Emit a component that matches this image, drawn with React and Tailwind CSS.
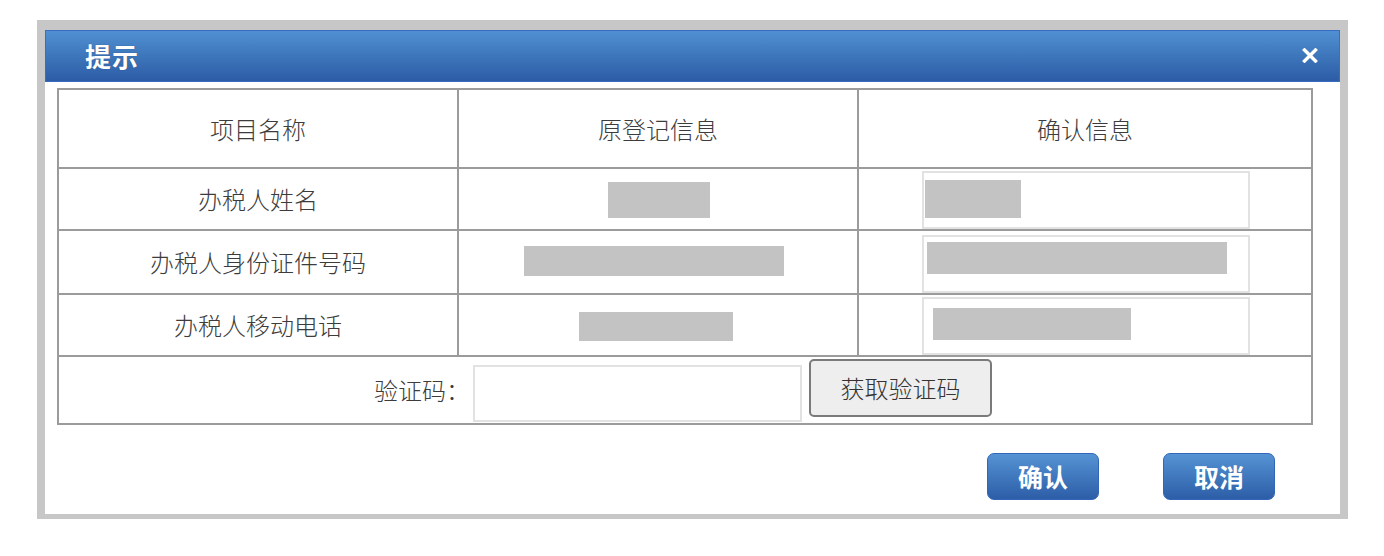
import React from "react";

const font = { fontFamily: '"Noto Sans CJK SC", "Noto Sans", sans-serif' };

function Blank({ w, h }) {
  return <div className="bg-[#c3c3c3]" style={{ width: w, height: h }} />;
}

export default function App() {
  return (
    <div className="w-[1384px] h-[556px] bg-white overflow-hidden" style={font}>
      <div className="ml-[37px] mt-[20px] w-[1311px] h-[499px] border-solid border-[#c7c7c7] border-t-[10px] border-x-[8px] border-b-[5px] bg-white flex flex-col">
        {/* title bar */}
        <div className="h-[52px] shrink-0 flex items-center justify-between pl-[39px] pr-[21px] bg-gradient-to-b from-[#5090d2] to-[#2c5ca5] border border-[#3a6cc2]">
          <span className="text-white font-bold text-[26px] leading-none tracking-[1px] [text-shadow:0_0_1px_rgba(0,0,0,0.4)]">
            提示
          </span>
          <svg width="16" height="15" viewBox="0 0 16 15" className="mt-[-2px]">
            <path d="M2.5 2 L13.5 13 M13.5 2 L2.5 13" stroke="#ffffff" strokeWidth="3.4" strokeLinecap="square" />
          </svg>
        </div>

        {/* content */}
        <div className="flex-1 flex flex-col pl-[12px] pt-[6px]">
          <div className="w-[1256px] border-t-2 border-l-2 border-[#9b9b9b] grid grid-cols-[400px_400px_454px] text-[24px] font-light text-[#3c3c3c] leading-none">
            {/* header */}
            <div className="h-[79px] border-r-2 border-b-2 border-[#9b9b9b] flex items-center justify-center">项目名称</div>
            <div className="h-[79px] border-r-2 border-b-2 border-[#9b9b9b] flex items-center justify-center">原登记信息</div>
            <div className="h-[79px] border-r-2 border-b-2 border-[#9b9b9b] flex items-center justify-center">确认信息</div>

            {/* row 2 */}
            <div className="h-[62px] border-r-2 border-b-2 border-[#9b9b9b] flex items-center justify-center">办税人姓名</div>
            <div className="h-[62px] border-r-2 border-b-2 border-[#9b9b9b] flex items-center justify-center pt-[2px] pl-[2px]">
              <Blank w={102} h={36} />
            </div>
            <div className="h-[62px] border-r-2 border-b-2 border-[#9b9b9b] pl-[63px] pt-[2px]">
              <div className="w-[328px] h-[58px] border-2 border-[#e2e2e2] pl-[1px] pt-[7px]">
                <Blank w={96} h={38} />
              </div>
            </div>

            {/* row 3 */}
            <div className="h-[64px] border-r-2 border-b-2 border-[#9b9b9b] flex items-center justify-center">办税人身份证件号码</div>
            <div className="h-[64px] border-r-2 border-b-2 border-[#9b9b9b] flex items-start justify-center pt-[15px] pr-[8px]">
              <Blank w={260} h={30} />
            </div>
            <div className="h-[64px] border-r-2 border-b-2 border-[#9b9b9b] pl-[63px] pt-[4px]">
              <div className="w-[328px] h-[58px] border-2 border-[#e2e2e2] pl-[3px] pt-[5px]">
                <Blank w={300} h={32} />
              </div>
            </div>

            {/* row 4 */}
            <div className="h-[62px] border-r-2 border-b-2 border-[#9b9b9b] flex items-center justify-center">办税人移动电话</div>
            <div className="h-[62px] border-r-2 border-b-2 border-[#9b9b9b] flex items-start justify-center pt-[17px] pr-[4px]">
              <Blank w={154} h={29} />
            </div>
            <div className="h-[62px] border-r-2 border-b-2 border-[#9b9b9b] pl-[63px] pt-[2px]">
              <div className="w-[328px] h-[58px] border-2 border-[#e2e2e2] pl-[9px] pt-[9px]">
                <Blank w={198} h={32} />
              </div>
            </div>

            {/* row 5 */}
            <div className="col-span-3 h-[68px] border-r-2 border-b-2 border-[#9b9b9b] flex items-start pl-[315px]">
              <span className="w-[99px] h-[66px] flex items-center">验证码：</span>
              <div className="mt-[8px] w-[329px] h-[57px] border-2 border-[#e2e2e2] bg-white" />
              <button className="ml-[7px] mt-[2px] w-[183px] h-[58px] rounded-[5px] border-2 border-[#7a7a7a] bg-[#eeeeee] text-[24px] font-light text-[#333] leading-none flex items-center justify-center" style={font}>
                获取验证码
              </button>
            </div>
          </div>

          {/* bottom buttons */}
          <div className="flex justify-end gap-[64px] pr-[65px] mt-[28px]">
            <button className="w-[112px] h-[47px] rounded-[7px] border border-[#3266b8] bg-gradient-to-b from-[#5593d4] to-[#2d5ea7] text-white font-bold text-[25px] leading-none flex items-center justify-center" style={font}>
              确认
            </button>
            <button className="w-[112px] h-[47px] rounded-[7px] border border-[#3266b8] bg-gradient-to-b from-[#5593d4] to-[#2d5ea7] text-white font-bold text-[25px] leading-none flex items-center justify-center" style={font}>
              取消
            </button>
          </div>
        </div>
      </div>
    </div>
  );
}
